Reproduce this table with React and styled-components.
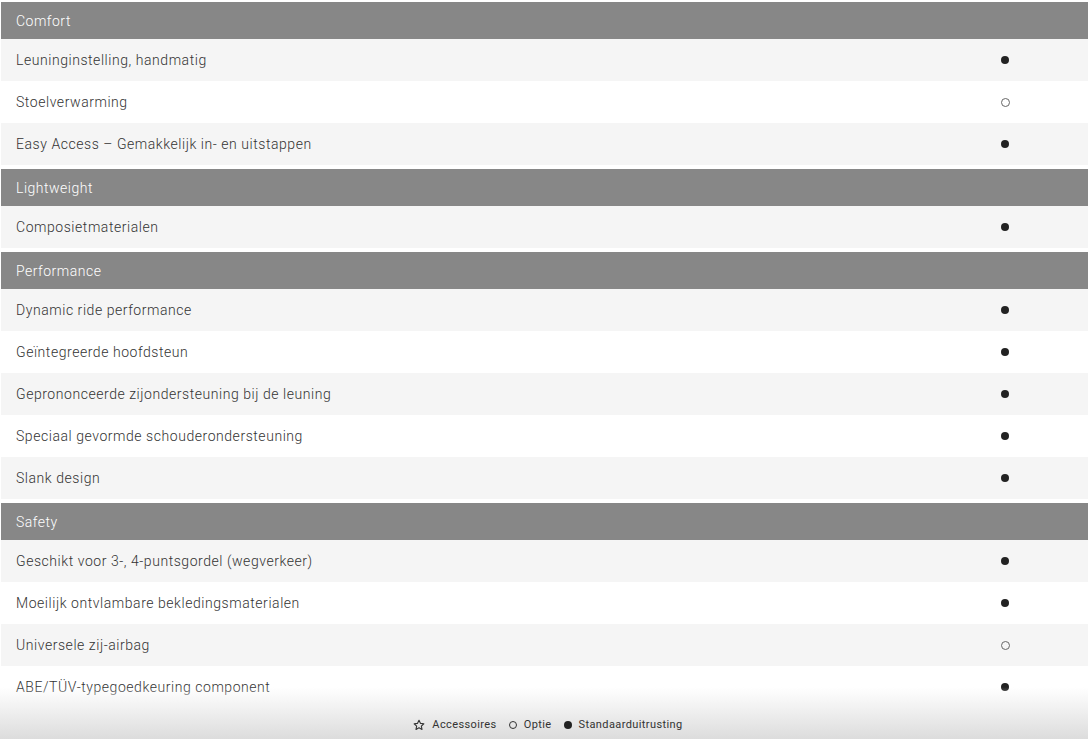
import React from 'react';
import styled, { createGlobalStyle } from 'styled-components';

const GlobalStyle = createGlobalStyle`
  html, body {
    margin: 0;
    padding: 0;
    background: #fff;
    font-family: Roboto, 'Liberation Sans', Arial, sans-serif;
    overflow: hidden;
  }
`;

const Page = styled.div`
  position: relative;
  height: 739px;
  overflow: hidden;
  padding: 2px 0 0 1px;
  box-sizing: border-box;
`;

const Group = styled.section`
  margin-bottom: 4px;
`;

const GroupHeader = styled.div`
  height: 37px;
  background-color: #878787;
  color: #fff;
  font-size: 14px;
  font-weight: 300;
  letter-spacing: 0.5px;
  display: flex;
  align-items: center;
  padding-left: 15px;
`;

const Row = styled.div`
  height: 42px;
  display: grid;
  grid-template-columns: 1fr 164px;
  align-items: center;
  background-color: ${(p) => (p.$shaded ? '#f5f5f5' : '#fff')};
  color: #333;
  font-size: 14px;
  font-weight: 300;
  letter-spacing: 0.55px;
`;

const Label = styled.span`
  padding-left: 15px;
`;

const Mark = styled.span`
  justify-self: center;
  width: ${(p) => (p.$type === 'option' ? '9px' : '8px')};
  height: ${(p) => (p.$type === 'option' ? '9px' : '8px')};
  border-radius: 50%;
  box-sizing: border-box;
  background: ${(p) => (p.$type === 'option' ? 'transparent' : '#222')};
  border: ${(p) => (p.$type === 'option' ? '1px solid #666' : 'none')};
  transform: translateX(-1px);
`;

const Footer = styled.footer`
  position: absolute;
  left: 0;
  right: 0;
  bottom: 0;
  height: 52px;
  background: linear-gradient(to bottom, rgba(255, 255, 255, 0) 0%, rgba(240, 240, 240, 0.9) 40%, #dcdcdc 100%);
  display: flex;
  align-items: flex-end;
  justify-content: center;
  padding-bottom: 8px;
  box-sizing: border-box;
`;

const Legend = styled.div`
  display: flex;
  align-items: center;
  gap: 12px;
  font-size: 11px;
  letter-spacing: 0.4px;
  color: #333;
  transform: translateX(4px);
`;

const LegendItem = styled.span`
  display: flex;
  align-items: center;
  gap: 7px;
`;

const SmallDot = styled.span`
  width: 8px;
  height: 8px;
  border-radius: 50%;
  box-sizing: border-box;
  background: ${(p) => (p.$hollow ? 'transparent' : '#222')};
  border: ${(p) => (p.$hollow ? '1px solid #333' : 'none')};
`;

const Star = () => (
  <svg width="12" height="12" viewBox="0 0 24 24" fill="none" stroke="#333" strokeWidth="2.2" strokeLinejoin="round">
    <path d="M12 2.5l2.9 6.2 6.8.8-5 4.6 1.3 6.7L12 17.5l-6 3.3 1.3-6.7-5-4.6 6.8-.8z" />
  </svg>
);

const groups = [
  {
    title: 'Comfort',
    items: [
      ['Leuninginstelling, handmatig', 'standard'],
      ['Stoelverwarming', 'option'],
      ['Easy Access – Gemakkelijk in- en uitstappen', 'standard'],
    ],
  },
  {
    title: 'Lightweight',
    items: [['Composietmaterialen', 'standard']],
  },
  {
    title: 'Performance',
    items: [
      ['Dynamic ride performance', 'standard'],
      ['Geïntegreerde hoofdsteun', 'standard'],
      ['Geprononceerde zijondersteuning bij de leuning', 'standard'],
      ['Speciaal gevormde schouderondersteuning', 'standard'],
      ['Slank design', 'standard'],
    ],
  },
  {
    title: 'Safety',
    items: [
      ['Geschikt voor 3-, 4-puntsgordel (wegverkeer)', 'standard'],
      ['Moeilijk ontvlambare bekledingsmaterialen', 'standard'],
      ['Universele zij-airbag', 'option'],
      ['ABE/TÜV-typegoedkeuring component', 'standard'],
    ],
  },
];

export default function App() {
  return (
    <>
      <GlobalStyle />
      <Page>
        {groups.map((group) => (
          <Group key={group.title}>
            <GroupHeader>{group.title}</GroupHeader>
            {group.items.map(([label, type], i) => (
              <Row key={label} $shaded={i % 2 === 0}>
                <Label>{label}</Label>
                <Mark $type={type} />
              </Row>
            ))}
          </Group>
        ))}
        <Footer>
          <Legend>
            <LegendItem>
              <Star />
              Accessoires
            </LegendItem>
            <LegendItem>
              <SmallDot $hollow />
              Optie
            </LegendItem>
            <LegendItem>
              <SmallDot />
              Standaarduitrusting
            </LegendItem>
          </Legend>
        </Footer>
      </Page>
    </>
  );
}
